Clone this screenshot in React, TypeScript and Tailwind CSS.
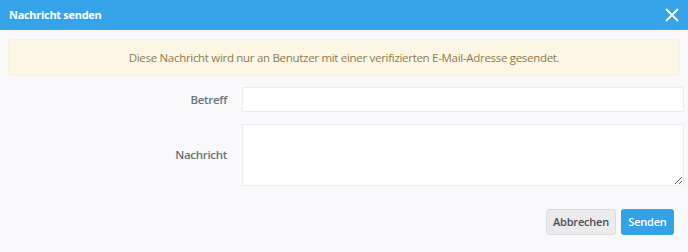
import React from "react";

export default function App() {
  return (
    <div className="w-[688px] h-[252px] bg-[#f9f9fb] overflow-hidden" style={{ fontFamily: '"Open Sans", sans-serif' }}>
      <div className="h-[30px] bg-[#36a3e9] flex items-center justify-between pl-[9px] pr-[8px]">
        <span className="text-white font-bold text-[11px] tracking-[-0.3px]">Nachricht senden</span>
        <svg width="14" height="14" viewBox="0 0 14 14" className="mr-[1px]">
          <path d="M1.5 1.5 L12.5 12.5 M12.5 1.5 L1.5 12.5" stroke="white" strokeWidth="1.8" strokeLinecap="round" />
        </svg>
      </div>
      <div className="px-[8px] pt-[9px]">
        <div className="h-[37px] bg-[#fcf7e4] border border-[#faf1d8] rounded-[3px] flex items-center justify-center text-[11.5px] tracking-[-0.3px] text-[#8f7a4e]">
          Diese Nachricht wird nur an Benutzer mit einer verifizierten E-Mail-Adresse gesendet.
        </div>
      </div>
      <div className="pl-[8px] pr-[4px] pt-[11px] flex flex-col gap-[12px]">
        <div className="flex items-center">
          <label className="w-[219px] text-right text-[11.5px] tracking-[-0.3px] font-semibold text-[#6b717b]">Betreff</label>
          <input className="ml-[15px] flex-1 h-[25px] bg-white border border-[#ececf0] rounded-[2px]" />
        </div>
        <div className="flex items-center">
          <label className="w-[219px] text-right text-[11.5px] tracking-[-0.3px] font-semibold text-[#6b717b]">Nachricht</label>
          <textarea className="ml-[15px] flex-1 h-[62px] bg-white border border-[#ececf0] rounded-[2px] resize-y" />
        </div>
      </div>
      <div className="flex justify-end gap-[5px] pr-[14px] pt-[23px]">
        <button className="w-[70px] h-[26px] bg-[#ebebee] border border-[#dcdce0] rounded-[3px] text-[11px] tracking-[-0.2px] font-semibold text-[#4b4f57]">Abbrechen</button>
        <button className="w-[53px] h-[26px] bg-[#33a2e8] rounded-[3px] text-[11px] tracking-[-0.2px] font-semibold text-white">Senden</button>
      </div>
    </div>
  );
}
